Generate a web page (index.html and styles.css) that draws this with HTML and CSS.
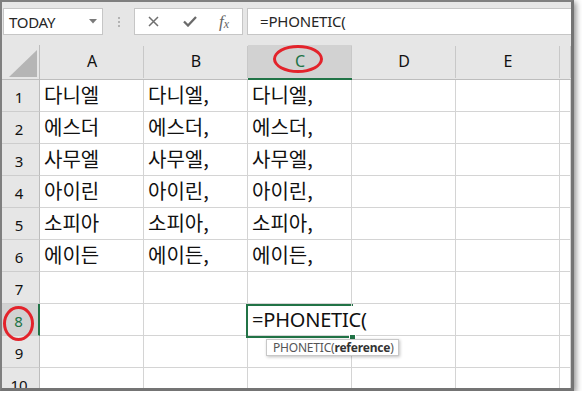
FILE: index.html
```html
<!DOCTYPE html>
<html lang="ko">
<head>
<meta charset="utf-8">
<link rel="stylesheet" href="styles.css">
</head>
<body>
<div class="frame">
  <div class="toolbar">
    <div class="namebox">
      <span class="nb-text">TODAY</span>
      <svg class="nb-arrow" width="8" height="5" viewBox="0 0 8 5"><path d="M0 0H8L4 4.5Z" fill="#7a7a7a"/></svg>
    </div>
    <div class="grip"><i></i><i></i><i></i></div>
    <div class="fbtns">
      <svg class="ic-x" width="11" height="11" viewBox="0 0 11 11"><path d="M1 1L10 10M10 1L1 10" stroke="#6f6f6f" stroke-width="1.5" fill="none"/></svg>
      <svg class="ic-ok" width="14" height="11" viewBox="0 0 14 11"><path d="M1 5.5L5 9.5L13 1" stroke="#6a6a6a" stroke-width="2.3" fill="none"/></svg>
      <span class="fx">f<sub>x</sub></span>
    </div>
    <div class="finput">=PHONETIC(</div>
  </div>
  <div class="sheet">
    <div class="grid">
      <div class="corner"><svg width="28" height="27" viewBox="0 0 28 27"><path d="M28 0V27H0Z" fill="#b5b5b5"/></svg></div>
      <div class="ch">A</div>
      <div class="ch">B</div>
      <div class="ch ch-sel">C</div>
      <div class="ch">D</div>
      <div class="ch">E</div>
      <div class="ch"></div>

      <div class="rh">1</div><div class="c">다니엘</div><div class="c">다니엘,</div><div class="c">다니엘,</div><div class="c"></div><div class="c"></div><div class="c"></div>
      <div class="rh">2</div><div class="c">에스더</div><div class="c">에스더,</div><div class="c">에스더,</div><div class="c"></div><div class="c"></div><div class="c"></div>
      <div class="rh">3</div><div class="c">사무엘</div><div class="c">사무엘,</div><div class="c">사무엘,</div><div class="c"></div><div class="c"></div><div class="c"></div>
      <div class="rh">4</div><div class="c">아이린</div><div class="c">아이린,</div><div class="c">아이린,</div><div class="c"></div><div class="c"></div><div class="c"></div>
      <div class="rh">5</div><div class="c">소피아</div><div class="c">소피아,</div><div class="c">소피아,</div><div class="c"></div><div class="c"></div><div class="c"></div>
      <div class="rh">6</div><div class="c">에이든</div><div class="c">에이든,</div><div class="c">에이든,</div><div class="c"></div><div class="c"></div><div class="c"></div>
      <div class="rh">7</div><div class="c"></div><div class="c"></div><div class="c"></div><div class="c"></div><div class="c"></div><div class="c"></div>
      <div class="rh rh-sel">8</div><div class="c"></div><div class="c"></div><div class="c c-edit"><span class="edit-text">=PHONETIC(</span></div><div class="c"></div><div class="c"></div><div class="c"></div>
      <div class="rh">9</div><div class="c"></div><div class="c"></div><div class="c"></div><div class="c"></div><div class="c"></div><div class="c"></div>
      <div class="rh">10</div><div class="c"></div><div class="c"></div><div class="c"></div><div class="c"></div><div class="c"></div><div class="c"></div>
    </div>
    <div class="active"></div>
    <div class="handle"></div>
    <div class="tip">PHONETIC(<b>reference</b>)</div>
  </div>
  <div class="ring ring-c"></div>
  <div class="ring ring-8"></div>
</div>
</body>
</html>
```
FILE: styles.css
```css
html, body {
  margin: 0;
  padding: 0;
  background: #ffffff;
}

.frame {
  position: relative;
  width: 574px;
  height: 391px;
  box-sizing: border-box;
  border-top: 2px solid #7f7f7f;
  border-left: 2px solid #7f7f7f;
  border-right: 3px solid #747474;
  border-bottom: 3px solid #747474;
  box-shadow: 2px 2px 6px rgba(0, 0, 0, 0.45);
  display: flex;
  flex-direction: column;
  overflow: visible;
  font-family: "Noto Sans", "Open Sans", sans-serif;
}

.toolbar {
  height: 43px;
  flex: none;
  background: #e6e6e6;
  display: flex;
  align-items: flex-start;
  padding-top: 6px;
  box-sizing: border-box;
}

.namebox {
  margin-left: 1px;
  width: 100px;
  height: 27px;
  box-sizing: border-box;
  border: 1px solid #c6c6c6;
  background: #fff;
  display: flex;
  align-items: center;
  padding-left: 5px;
  padding-right: 5px;
}
.nb-text {
  flex: 1;
  font-size: 15px;
  color: #262626;
  letter-spacing: -0.3px;
}
.nb-arrow { display: block; }

.grip {
  width: 31px;
  height: 27px;
  display: flex;
  flex-direction: column;
  align-items: center;
  justify-content: center;
  gap: 2px;
}
.grip i {
  display: block;
  width: 2px;
  height: 2px;
  background: #b3b3b3;
}

.fbtns {
  width: 109px;
  height: 27px;
  box-sizing: border-box;
  border: 1px solid #c6c6c6;
  background: #fff;
  display: flex;
  align-items: center;
  padding-left: 13px;
}
.ic-x { display: block; }
.ic-ok { display: block; margin-left: 24px; }
.fx {
  margin-left: 22px;
  font-family: "Liberation Serif", serif;
  font-style: italic;
  font-size: 17px;
  color: #666;
  line-height: 1;
}
.fx sub {
  font-size: 12px;
  vertical-align: baseline;
  position: relative;
  top: 1px;
}

.finput {
  margin-left: 4px;
  flex: 1;
  height: 27px;
  box-sizing: border-box;
  border: 1px solid #c6c6c6;
  border-right: none;
  background: #fff;
  font-size: 15px;
  line-height: 24px;
  padding-left: 12px;
  color: #262626;
  letter-spacing: -0.2px;
}

.sheet {
  position: relative;
  flex: 1;
  overflow: hidden;
}

.grid {
  display: grid;
  grid-template-columns: 38px repeat(5, 104px) 1fr;
  grid-template-rows: 35px repeat(10, 32px);
}

.corner {
  background: #e6e6e6;
  border-right: 1px solid #bdbdbd;
  border-bottom: 1px solid #bdbdbd;
  box-sizing: border-box;
  display: flex;
  align-items: flex-end;
  justify-content: flex-end;
  padding: 0 2px 2px 0;
}
.corner svg { display: block; }

.ch {
  background: #e6e6e6;
  border-bottom: 1px solid #bdbdbd;
  box-sizing: border-box;
  position: relative;
  font-size: 16px;
  color: #111;
  display: flex;
  align-items: center;
  justify-content: center;
  padding-bottom: 3px;
}
.ch::after {
  content: "";
  position: absolute;
  right: 0;
  top: 1px;
  bottom: 1px;
  width: 1px;
  background: #c8c8c8;
}
.ch-sel {
  background: #d2d2d2;
  color: #217346;
  border-bottom: 2px solid #217346;
  padding-bottom: 2px;
}

.rh {
  background: #e6e6e6;
  border-right: 1px solid #bdbdbd;
  border-bottom: 1px solid #cdcdcd;
  box-sizing: border-box;
  font-size: 15px;
  color: #111;
  display: flex;
  align-items: center;
  justify-content: center;
  padding-right: 3px;
  padding-top: 2px;
}
.rh-sel {
  background: #d2d2d2;
  color: #217346;
  border-right: 2px solid #217346;
}

.c {
  border-right: 1px solid #d4d4d4;
  border-bottom: 1px solid #d4d4d4;
  box-sizing: border-box;
  font-family: "Noto Sans CJK KR", "Noto Sans", sans-serif;
  font-size: 20px;
  line-height: 30px;
  color: #111;
  padding-left: 4px;
  white-space: nowrap;
  overflow: visible;
  position: relative;
}

.c-edit { z-index: 2; }
.edit-text {
  display: inline-block;
  background: #fff;
  font-family: "Noto Sans", sans-serif;
  font-size: 20px;
  letter-spacing: -0.2px;
  line-height: 28px;
  padding-right: 3px;
  margin-top: 1px;
  color: #111;
}

.active {
  position: absolute;
  left: 244px;
  top: 259px;
  width: 107px;
  height: 34px;
  box-sizing: border-box;
  border: 2px solid #217346;
  border-right: none;
  z-index: 1;
}
.handle {
  position: absolute;
  left: 347px;
  top: 289px;
  width: 5px;
  height: 5px;
  background: #217346;
  border: 1px solid #fff;
  z-index: 3;
}

.tip {
  position: absolute;
  left: 264px;
  top: 294px;
  height: 17px;
  box-sizing: border-box;
  padding: 0 4px 0 6px;
  border: 1px solid #c8c8c8;
  background: #fff;
  box-shadow: 1px 1px 3px rgba(0, 0, 0, 0.25);
  font-family: "Noto Sans", sans-serif;
  font-size: 12px;
  line-height: 15px;
  color: #555;
  letter-spacing: -0.2px;
  z-index: 4;
}
.tip b { color: #333; font-weight: 700; }

.ring {
  position: absolute;
  border: 3px solid #e3232b;
  border-radius: 50%;
  box-sizing: border-box;
  z-index: 5;
}
.ring-c {
  left: 271px;
  top: 43px;
  width: 50px;
  height: 28px;
}
.ring-8 {
  left: 1px;
  top: 304px;
  width: 31px;
  height: 35px;
}
```
